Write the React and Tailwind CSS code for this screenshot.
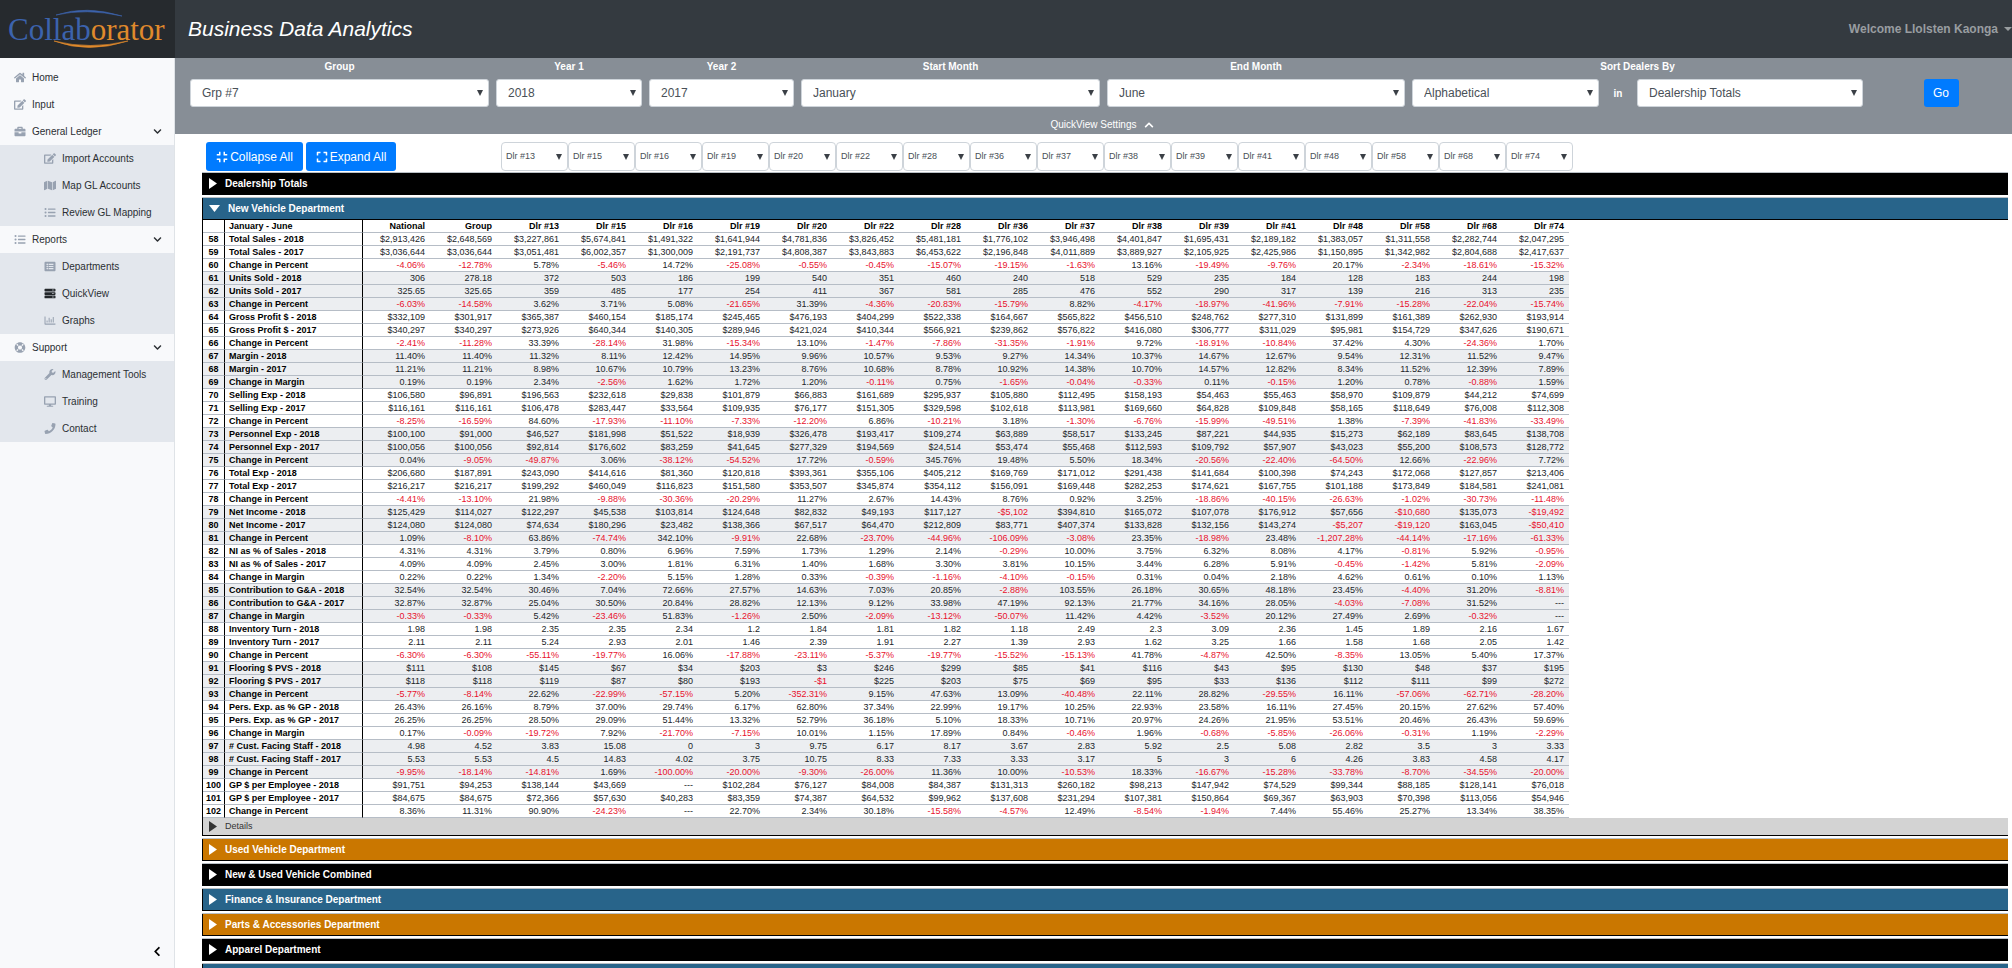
import React, { useState } from 'react';
import {
  FaHome, FaEdit, FaBriefcase, FaMap, FaListUl, FaListAlt, FaServer, FaRegChartBar,
  FaLifeRing, FaWrench, FaDesktop, FaPhone, FaCompress, FaExpand,
  FaChevronDown, FaChevronLeft, FaChevronUp,
} from 'react-icons/fa';

const MENU = [
  { label: 'Home', icon: FaHome },
  { label: 'Input', icon: FaEdit },
  {
    label: 'General Ledger',
    icon: FaBriefcase,
    items: [
      { label: 'Import Accounts', icon: FaEdit },
      { label: 'Map GL Accounts', icon: FaMap },
      { label: 'Review GL Mapping', icon: FaListUl },
    ],
  },
  {
    label: 'Reports',
    icon: FaListUl,
    items: [
      { label: 'Departments', icon: FaListAlt },
      { label: 'QuickView', icon: FaServer, active: true },
      { label: 'Graphs', icon: FaRegChartBar },
    ],
  },
  {
    label: 'Support',
    icon: FaLifeRing,
    items: [
      { label: 'Management Tools', icon: FaWrench },
      { label: 'Training', icon: FaDesktop },
      { label: 'Contact', icon: FaPhone },
    ],
  },
];

const DEALERS = ['13', '15', '16', '19', '20', '22', '28', '36', '37', '38', '39', '41', '48', '58', '68', '74'];

const FIRST_ROW = 58;

// National, Group, then one value per dealer
const ROWS = [
  ['Total Sales - 2018', '$2,913,426 $2,648,569 $3,227,861 $5,674,841 $1,491,322 $1,641,944 $4,781,836 $3,826,452 $5,481,181 $1,776,102 $3,946,498 $4,401,847 $1,695,431 $2,189,182 $1,383,057 $1,311,558 $2,282,744 $2,047,295'],
  ['Total Sales - 2017', '$3,036,644 $3,036,644 $3,051,481 $6,002,357 $1,300,009 $2,191,737 $4,808,387 $3,843,883 $6,453,622 $2,196,848 $4,011,889 $3,889,927 $2,105,925 $2,425,986 $1,150,895 $1,342,982 $2,804,688 $2,417,637'],
  ['Change in Percent', '-4.06% -12.78% 5.78% -5.46% 14.72% -25.08% -0.55% -0.45% -15.07% -19.15% -1.63% 13.16% -19.49% -9.76% 20.17% -2.34% -18.61% -15.32%'],
  ['Units Sold - 2018', '306 278.18 372 503 186 199 540 351 460 240 518 529 235 184 128 183 244 198'],
  ['Units Sold - 2017', '325.65 325.65 359 485 177 254 411 367 581 285 476 552 290 317 139 216 313 235'],
  ['Change in Percent', '-6.03% -14.58% 3.62% 3.71% 5.08% -21.65% 31.39% -4.36% -20.83% -15.79% 8.82% -4.17% -18.97% -41.96% -7.91% -15.28% -22.04% -15.74%'],
  ['Gross Profit $ - 2018', '$332,109 $301,917 $365,387 $460,154 $185,174 $245,465 $476,193 $404,299 $522,338 $164,667 $565,822 $456,510 $248,762 $277,310 $131,899 $161,389 $262,930 $193,914'],
  ['Gross Profit $ - 2017', '$340,297 $340,297 $273,926 $640,344 $140,305 $289,946 $421,024 $410,344 $566,921 $239,862 $576,822 $416,080 $306,777 $311,029 $95,981 $154,729 $347,626 $190,671'],
  ['Change in Percent', '-2.41% -11.28% 33.39% -28.14% 31.98% -15.34% 13.10% -1.47% -7.86% -31.35% -1.91% 9.72% -18.91% -10.84% 37.42% 4.30% -24.36% 1.70%'],
  ['Margin - 2018', '11.40% 11.40% 11.32% 8.11% 12.42% 14.95% 9.96% 10.57% 9.53% 9.27% 14.34% 10.37% 14.67% 12.67% 9.54% 12.31% 11.52% 9.47%'],
  ['Margin - 2017', '11.21% 11.21% 8.98% 10.67% 10.79% 13.23% 8.76% 10.68% 8.78% 10.92% 14.38% 10.70% 14.57% 12.82% 8.34% 11.52% 12.39% 7.89%'],
  ['Change in Margin', '0.19% 0.19% 2.34% -2.56% 1.62% 1.72% 1.20% -0.11% 0.75% -1.65% -0.04% -0.33% 0.11% -0.15% 1.20% 0.78% -0.88% 1.59%'],
  ['Selling Exp - 2018', '$106,580 $96,891 $196,563 $232,618 $29,838 $101,879 $66,883 $161,689 $295,937 $105,880 $112,495 $158,193 $54,463 $55,463 $58,970 $109,879 $44,212 $74,699'],
  ['Selling Exp - 2017', '$116,161 $116,161 $106,478 $283,447 $33,564 $109,935 $76,177 $151,305 $329,598 $102,618 $113,981 $169,660 $64,828 $109,848 $58,165 $118,649 $76,008 $112,308'],
  ['Change in Percent', '-8.25% -16.59% 84.60% -17.93% -11.10% -7.33% -12.20% 6.86% -10.21% 3.18% -1.30% -6.76% -15.99% -49.51% 1.38% -7.39% -41.83% -33.49%'],
  ['Personnel Exp - 2018', '$100,100 $91,000 $46,527 $181,998 $51,522 $18,939 $326,478 $193,417 $109,274 $63,889 $58,517 $133,245 $87,221 $44,935 $15,273 $62,189 $83,645 $138,708'],
  ['Personnel Exp - 2017', '$100,056 $100,056 $92,814 $176,602 $83,259 $41,645 $277,329 $194,569 $24,514 $53,474 $55,468 $112,593 $109,792 $57,907 $43,023 $55,200 $108,573 $128,772'],
  ['Change in Percent', '0.04% -9.05% -49.87% 3.06% -38.12% -54.52% 17.72% -0.59% 345.76% 19.48% 5.50% 18.34% -20.56% -22.40% -64.50% 12.66% -22.96% 7.72%'],
  ['Total Exp - 2018', '$206,680 $187,891 $243,090 $414,616 $81,360 $120,818 $393,361 $355,106 $405,212 $169,769 $171,012 $291,438 $141,684 $100,398 $74,243 $172,068 $127,857 $213,406'],
  ['Total Exp - 2017', '$216,217 $216,217 $199,292 $460,049 $116,823 $151,580 $353,507 $345,874 $354,112 $156,091 $169,448 $282,253 $174,621 $167,755 $101,188 $173,849 $184,581 $241,081'],
  ['Change in Percent', '-4.41% -13.10% 21.98% -9.88% -30.36% -20.29% 11.27% 2.67% 14.43% 8.76% 0.92% 3.25% -18.86% -40.15% -26.63% -1.02% -30.73% -11.48%'],
  ['Net Income - 2018', '$125,429 $114,027 $122,297 $45,538 $103,814 $124,648 $82,832 $49,193 $117,127 -$5,102 $394,810 $165,072 $107,078 $176,912 $57,656 -$10,680 $135,073 -$19,492'],
  ['Net Income - 2017', '$124,080 $124,080 $74,634 $180,296 $23,482 $138,366 $67,517 $64,470 $212,809 $83,771 $407,374 $133,828 $132,156 $143,274 -$5,207 -$19,120 $163,045 -$50,410'],
  ['Change in Percent', '1.09% -8.10% 63.86% -74.74% 342.10% -9.91% 22.68% -23.70% -44.96% -106.09% -3.08% 23.35% -18.98% 23.48% -1,207.28% -44.14% -17.16% -61.33%'],
  ['NI as % of Sales - 2018', '4.31% 4.31% 3.79% 0.80% 6.96% 7.59% 1.73% 1.29% 2.14% -0.29% 10.00% 3.75% 6.32% 8.08% 4.17% -0.81% 5.92% -0.95%'],
  ['NI as % of Sales - 2017', '4.09% 4.09% 2.45% 3.00% 1.81% 6.31% 1.40% 1.68% 3.30% 3.81% 10.15% 3.44% 6.28% 5.91% -0.45% -1.42% 5.81% -2.09%'],
  ['Change in Margin', '0.22% 0.22% 1.34% -2.20% 5.15% 1.28% 0.33% -0.39% -1.16% -4.10% -0.15% 0.31% 0.04% 2.18% 4.62% 0.61% 0.10% 1.13%'],
  ['Contribution to G&A - 2018', '32.54% 32.54% 30.46% 7.04% 72.66% 27.57% 14.63% 7.03% 20.85% -2.88% 103.55% 26.18% 30.65% 48.18% 23.45% -4.40% 31.20% -8.81%'],
  ['Contribution to G&A - 2017', '32.87% 32.87% 25.04% 30.50% 20.84% 28.82% 12.13% 9.12% 33.98% 47.19% 92.13% 21.77% 34.16% 28.05% -4.03% -7.08% 31.52% ---'],
  ['Change in Margin', '-0.33% -0.33% 5.42% -23.46% 51.83% -1.26% 2.50% -2.09% -13.12% -50.07% 11.42% 4.42% -3.52% 20.12% 27.49% 2.69% -0.32% ---'],
  ['Inventory Turn - 2018', '1.98 1.98 2.35 2.35 2.34 1.2 1.84 1.81 1.82 1.18 2.49 2.3 3.09 2.36 1.45 1.89 2.16 1.67'],
  ['Inventory Turn - 2017', '2.11 2.11 5.24 2.93 2.01 1.46 2.39 1.91 2.27 1.39 2.93 1.62 3.25 1.66 1.58 1.68 2.05 1.42'],
  ['Change in Percent', '-6.30% -6.30% -55.11% -19.77% 16.06% -17.88% -23.11% -5.37% -19.77% -15.52% -15.13% 41.78% -4.87% 42.50% -8.35% 13.05% 5.40% 17.37%'],
  ['Flooring $ PVS - 2018', '$111 $108 $145 $67 $34 $203 $3 $246 $299 $85 $41 $116 $43 $95 $130 $48 $37 $195'],
  ['Flooring $ PVS - 2017', '$118 $118 $119 $87 $80 $193 -$1 $225 $203 $75 $69 $95 $33 $136 $112 $111 $99 $272'],
  ['Change in Percent', '-5.77% -8.14% 22.62% -22.99% -57.15% 5.20% -352.31% 9.15% 47.63% 13.09% -40.48% 22.11% 28.82% -29.55% 16.11% -57.06% -62.71% -28.20%'],
  ['Pers. Exp. as % GP - 2018', '26.43% 26.16% 8.79% 37.00% 29.74% 6.17% 62.80% 37.34% 22.99% 19.17% 10.25% 22.93% 23.58% 16.11% 27.45% 20.15% 27.62% 57.40%'],
  ['Pers. Exp. as % GP - 2017', '26.25% 26.25% 28.50% 29.09% 51.44% 13.32% 52.79% 36.18% 5.10% 18.33% 10.71% 20.97% 24.26% 21.95% 53.51% 20.46% 26.43% 59.69%'],
  ['Change in Margin', '0.17% -0.09% -19.72% 7.92% -21.70% -7.15% 10.01% 1.15% 17.89% 0.84% -0.46% 1.96% -0.68% -5.85% -26.06% -0.31% 1.19% -2.29%'],
  ['# Cust. Facing Staff - 2018', '4.98 4.52 3.83 15.08 0 3 9.75 6.17 8.17 3.67 2.83 5.92 2.5 5.08 2.82 3.5 3 3.33'],
  ['# Cust. Facing Staff - 2017', '5.53 5.53 4.5 14.83 4.02 3.75 10.75 8.33 7.33 3.33 3.17 5 3 6 4.26 3.83 4.58 4.17'],
  ['Change in Percent', '-9.95% -18.14% -14.81% 1.69% -100.00% -20.00% -9.30% -26.00% 11.36% 10.00% -10.53% 18.33% -16.67% -15.28% -33.78% -8.70% -34.55% -20.00%'],
  ['GP $ per Employee - 2018', '$91,751 $94,253 $138,144 $43,669 --- $102,284 $76,127 $84,008 $84,387 $131,313 $260,182 $98,213 $147,942 $74,529 $99,344 $88,185 $128,141 $76,018'],
  ['GP $ per Employee - 2017', '$84,675 $84,675 $72,366 $57,630 $40,283 $83,359 $74,387 $64,532 $99,962 $137,608 $231,294 $107,381 $150,864 $69,367 $63,903 $70,398 $113,056 $54,946'],
  ['Change in Percent', '8.36% 11.31% 90.90% -24.23% --- 22.70% 2.34% 30.18% -15.58% -4.57% 12.49% -8.54% -1.94% 7.44% 55.46% 25.27% 13.34% 38.35%'],
];

const isNegative = (value) => /^-[$\d]/.test(value);

const Logo = () => (
  <svg className="h-[58px] w-[175px]" viewBox="0 0 175 58" role="img" aria-label="Collaborator">
    <path d="M56 15 Q86 5 122 16 Q86 8 56 15Z" fill="#3c63ad" stroke="#3c63ad" strokeWidth="0.6" />
    <path d="M54 41 Q88 54 128 41 Q90 50 54 41Z" fill="#e08a2c" stroke="#e08a2c" strokeWidth="0.6" />
    <text x="8" y="40" fontSize="31" fontFamily="'Liberation Serif', serif" fill="#3c63ad">
      Collab<tspan fill="#e08a2c">orator</tspan>
    </text>
  </svg>
);

const Select = ({ id, value, label, small }) => (
  <div className="relative min-w-0 flex-1">
    <select
      id={id}
      aria-label={label}
      defaultValue={value}
      className={
        small
          ? 'block h-[29px] w-full appearance-none rounded-sm border border-[#ced4da] bg-white pl-1 text-[9px] text-[#495057]'
          : 'block h-7 w-full appearance-none rounded-[3px] border border-[#ced4da] bg-white pl-[11px] text-[12px] text-[#495057]'
      }
    >
      <option>{value}</option>
    </select>
    <svg className="pointer-events-none absolute top-1/2 right-[6px] h-[6px] w-[6px] -translate-y-1/2" viewBox="0 0 6 6">
      <path d="M0 0h6L3 6z" fill="#3b4046" />
    </svg>
  </div>
);

const Field = ({ id, label, value }) => (
  <div className="flex min-w-0 flex-col">
    <label htmlFor={id} className="h-[21px] text-center text-[10px] leading-[18px] font-bold text-white">
      {label}
    </label>
    <Select id={id} value={value} />
  </div>
);

const Sidebar = () => {
  const [closed, setClosed] = useState({});

  return (
    <aside className="flex w-[175px] shrink-0 flex-col border-r border-[#dfe3e7] bg-[#f8f9fb]">
      <nav className="pt-[6px] text-[10px] text-[#2b2f33]">
        {MENU.map(({ label, icon: Icon, items }) => (
          <div key={label}>
            {items ? (
              <button
                type="button"
                onClick={() => setClosed({ ...closed, [label]: !closed[label] })}
                className="flex h-[27px] w-full items-center pr-3 pl-[14px] text-left"
              >
                <Icon className="h-[11px] w-[12px] text-[#98a2b1]" />
                <span className="ml-[6px] flex-1">{label}</span>
                <FaChevronDown className="h-[9px] w-[9px]" />
              </button>
            ) : (
              <a href="#" className="flex h-[27px] items-center pl-[14px]">
                <Icon className="h-[11px] w-[12px] text-[#98a2b1]" />
                <span className="ml-[6px]">{label}</span>
              </a>
            )}
            {items && !closed[label] && (
              <div className="bg-[#e3e7ed]">
                {items.map(({ label: name, icon: ItemIcon, active }) => (
                  <a key={name} href="#" className="flex h-[27px] items-center pl-11">
                    <ItemIcon className={active ? 'h-[11px] w-[12px] text-[#22262a]' : 'h-[11px] w-[12px] text-[#98a2b1]'} />
                    <span className="ml-[6px]">{name}</span>
                  </a>
                ))}
              </div>
            )}
          </div>
        ))}
      </nav>
      <button type="button" aria-label="Hide menu" className="mt-auto mr-3 mb-[10px] self-end p-px text-black">
        <FaChevronLeft className="h-[11px] w-[8px]" />
      </button>
    </aside>
  );
};

const Bar = ({ title, color, open, children }) => (
  <section className="mb-[2px] border-t border-[#b9c0c6]">
    <div className="border-l border-black">
      <button type="button" className={`flex h-[22px] w-full items-center border-b border-black pl-[6px] text-[10px] font-bold text-white ${color}`}>
        {open ? (
          <svg className="mr-2 h-[7px] w-[11px]" viewBox="0 0 11 7"><path d="M0 0h11L5.500 7z" fill="currentColor" /></svg>
        ) : (
          <svg className="mr-2 h-[11px] w-2" viewBox="0 0 8 11"><path d="M0 0v11L8 5.500z" fill="currentColor" /></svg>
        )}
        {title}
      </button>
      {children}
    </div>
  </section>
);

const DataTable = () => (
  <table className="w-[1366px] table-fixed border-separate border-spacing-0 text-[9px] leading-[12px] text-black">
    <thead>
      <tr>
        <th className="w-[22px] border-r border-b border-r-black border-b-[#b6bdc6] p-0" />
        <th className="w-[138px] border-r border-b border-r-black border-b-[#b6bdc6] p-0 pl-1 text-left">January - June</th>
        {['National', 'Group', ...DEALERS.map((d) => `Dlr #${d}`)].map((name) => (
          <th key={name} className="border-b border-[#b6bdc6] p-0 pr-[5px] text-right">{name}</th>
        ))}
      </tr>
    </thead>
    <tbody>
      {ROWS.map(([label, values], i) => (
        <tr key={i} className={Math.floor(i / 3) % 2 ? 'bg-[#eceef1]' : 'bg-white'}>
          <th className="border-r border-b border-r-black border-b-[#b6bdc6] p-0 text-center">{FIRST_ROW + i}</th>
          <th className="border-r border-b border-r-black border-b-[#b6bdc6] p-0 pl-1 text-left whitespace-nowrap">{label}</th>
          {values.split(' ').map((value, j) => (
            <td
              key={j}
              className={`border-b border-[#b6bdc6] p-0 pr-[5px] text-right ${isNegative(value) ? 'text-[#e8112d]' : 'text-[#212529]'}`}
            >
              {value}
            </td>
          ))}
        </tr>
      ))}
    </tbody>
  </table>
);

const App = () => (
  <div className="flex h-screen flex-col overflow-hidden bg-white font-['Liberation_Sans',Arial,sans-serif]">
    <header className="flex h-[58px] shrink-0 items-center bg-[#343a40]">
      <a href="#" className="bg-[#262a2e]"><Logo /></a>
      <h1 className="ml-[13px] flex-1 text-[21px] text-white italic">Business Data Analytics</h1>
      <button type="button" className="flex items-center gap-[6px] text-[12px] font-bold text-[#999da0]">
        Welcome Llolsten Kaonga
        <svg className="h-1 w-2" viewBox="0 0 8 4"><path d="M0 0h8L4 4z" fill="currentColor" /></svg>
      </button>
    </header>

    <div className="flex min-h-0 flex-1">
      <Sidebar />

      <main className="min-w-0 flex-1 overflow-hidden">
        <form className="h-[76px] bg-[#878e96]">
          <div className="grid grid-cols-[299fr_146fr_145fr_299fr_298fr_451fr_142fr] gap-[7px] pl-[15px]">
            <Field id="group" label="Group" value="Grp #7" />
            <Field id="year1" label="Year 1" value="2018" />
            <Field id="year2" label="Year 2" value="2017" />
            <Field id="start" label="Start Month" value="January" />
            <Field id="end" label="End Month" value="June" />
            <div className="flex min-w-0 flex-col">
              <label htmlFor="sort" className="h-[21px] text-center text-[10px] leading-[18px] font-bold text-white">
                Sort Dealers By
              </label>
              <div className="grid grid-cols-[187fr_38fr_226fr] items-center">
                <Select id="sort" value="Alphabetical" />
                <label htmlFor="sort-in" className="text-center text-[10px] font-bold text-white">in</label>
                <Select id="sort-in" value="Dealership Totals" />
              </div>
            </div>
            <div className="flex items-end justify-center">
              <button type="button" className="h-7 w-[35px] rounded-[3px] bg-[#007bff] text-[12px] text-white">Go</button>
            </div>
          </div>
          <button type="button" className="mt-[10px] flex w-full items-center justify-center gap-2 pl-[18px] text-[10px] leading-4 text-white">
            QuickView Settings
            <FaChevronUp className="h-[10px] w-[10px]" />
          </button>
        </form>

        <div className="pr-1 pl-[27px]">
          <div className="flex items-center pt-2 pb-px pl-1">
            <button type="button" className="flex h-[29px] w-[97px] items-center justify-center gap-[2px] rounded-[3px] bg-[#007bff] text-[12px] text-white">
              <FaCompress />Collapse All
            </button>
            <button type="button" className="ml-[3px] flex h-[29px] w-[90px] items-center justify-center gap-[2px] rounded-[3px] bg-[#007bff] text-[12px] text-white">
              <FaExpand />Expand All
            </button>
            <div className="ml-[105px] flex w-[1072px]">
              {DEALERS.map((d) => (
                <Select key={d} small label={`Dealer ${d}`} value={`Dlr #${d}`} />
              ))}
            </div>
          </div>

          <Bar title="Dealership Totals" color="bg-black" />
          <Bar title="New Vehicle Department" color="bg-[#28648a]" open>
            <DataTable />
            <button type="button" className="flex h-[18px] w-full items-center border-b border-black bg-[#d3d3d3] pl-[6px] text-[9px] text-[#333]">
              <svg className="mr-2 h-[11px] w-2" viewBox="0 0 8 11"><path d="M0 0v11L8 5.500z" fill="currentColor" /></svg>
              Details
            </button>
          </Bar>
          <Bar title="Used Vehicle Department" color="bg-[#ca7700]" />
          <Bar title="New & Used Vehicle Combined" color="bg-black" />
          <Bar title="Finance & Insurance Department" color="bg-[#28648a]" />
          <Bar title="Parts & Accessories Department" color="bg-[#ca7700]" />
          <Bar title="Apparel Department" color="bg-black" />
          <Bar title="" color="bg-[#28648a]" />
        </div>
      </main>
    </div>
  </div>
);

export default App;
